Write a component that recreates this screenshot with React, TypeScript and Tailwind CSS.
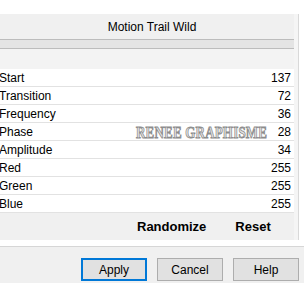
const rows: [string, number][] = [
  ['Start', 137],
  ['Transition', 72],
  ['Frequency', 36],
  ['Phase', 28],
  ['Amplitude', 34],
  ['Red', 255],
  ['Green', 255],
  ['Blue', 255],
];

export default function App() {
  return (
    <div
      className="relative w-[304px] h-[283px] overflow-hidden bg-white flex flex-col text-[11px] text-black"
      style={{ fontFamily: '"Liberation Sans", Arial, sans-serif' }}
    >
      <div className="h-[14px] shrink-0" />

      <div className="flex h-[226px] shrink-0">
        <div className="w-[294px] bg-[#f0f0f0] flex flex-col">
          <div className="h-[25px] flex items-center justify-center pl-[10px] text-[12px]">Motion Trail Wild</div>
          <div className="h-[10px] bg-[#e4e4e4] border-y border-[#bcbcbc]" />
          <div className="h-[20px] bg-[#f3f3f3]" />
          <div className="flex flex-col">
            {rows.map(([label, value]) => (
              <div
                key={label}
                className="h-[18px] bg-white border-b border-[#e2e2e2] flex items-center justify-between pr-[3px] text-[12px]"
              >
                <span className="-ml-[1px]">{label}</span>
                <span>{value}</span>
              </div>
            ))}
          </div>
          <div className="flex-1 flex items-center font-bold text-[13px]">
            <span className="ml-[137px]">Randomize</span>
            <span className="ml-[29px]">Reset</span>
          </div>
        </div>
        <div className="w-[5px] bg-[#f5f5f5] border-r border-[#d9d9d9]" />
        <div className="flex-1 bg-white" />
      </div>

      <div className="h-[7px] shrink-0 bg-white border-b border-[#d6d6d6]" />

      <div className="flex-1 bg-[#f0f0f0] flex items-start pt-[11px] pl-[81px] gap-[10px] text-[12px]">
        <button className="w-[66px] h-[23px] bg-[#e1e1e1] border-2 border-[#0078d7] flex items-center justify-center">
          Apply
        </button>
        <button className="w-[66px] h-[23px] bg-[#e1e1e1] border border-[#adadad] flex items-center justify-center">
          Cancel
        </button>
        <button className="w-[66px] h-[23px] bg-[#e1e1e1] border border-[#adadad] flex items-center justify-center">
          Help
        </button>
      </div>

      <div
        className="absolute left-[136px] top-[123px] text-[13px] font-bold tracking-[0.2px] text-[#e6e6e6] [-webkit-text-stroke:0.7px_#8c8c8c] scale-y-[1.25]"
        style={{ fontFamily: '"Liberation Serif", "Times New Roman", serif' }}
      >
        RENEE GRAPHISME
      </div>
    </div>
  );
}
